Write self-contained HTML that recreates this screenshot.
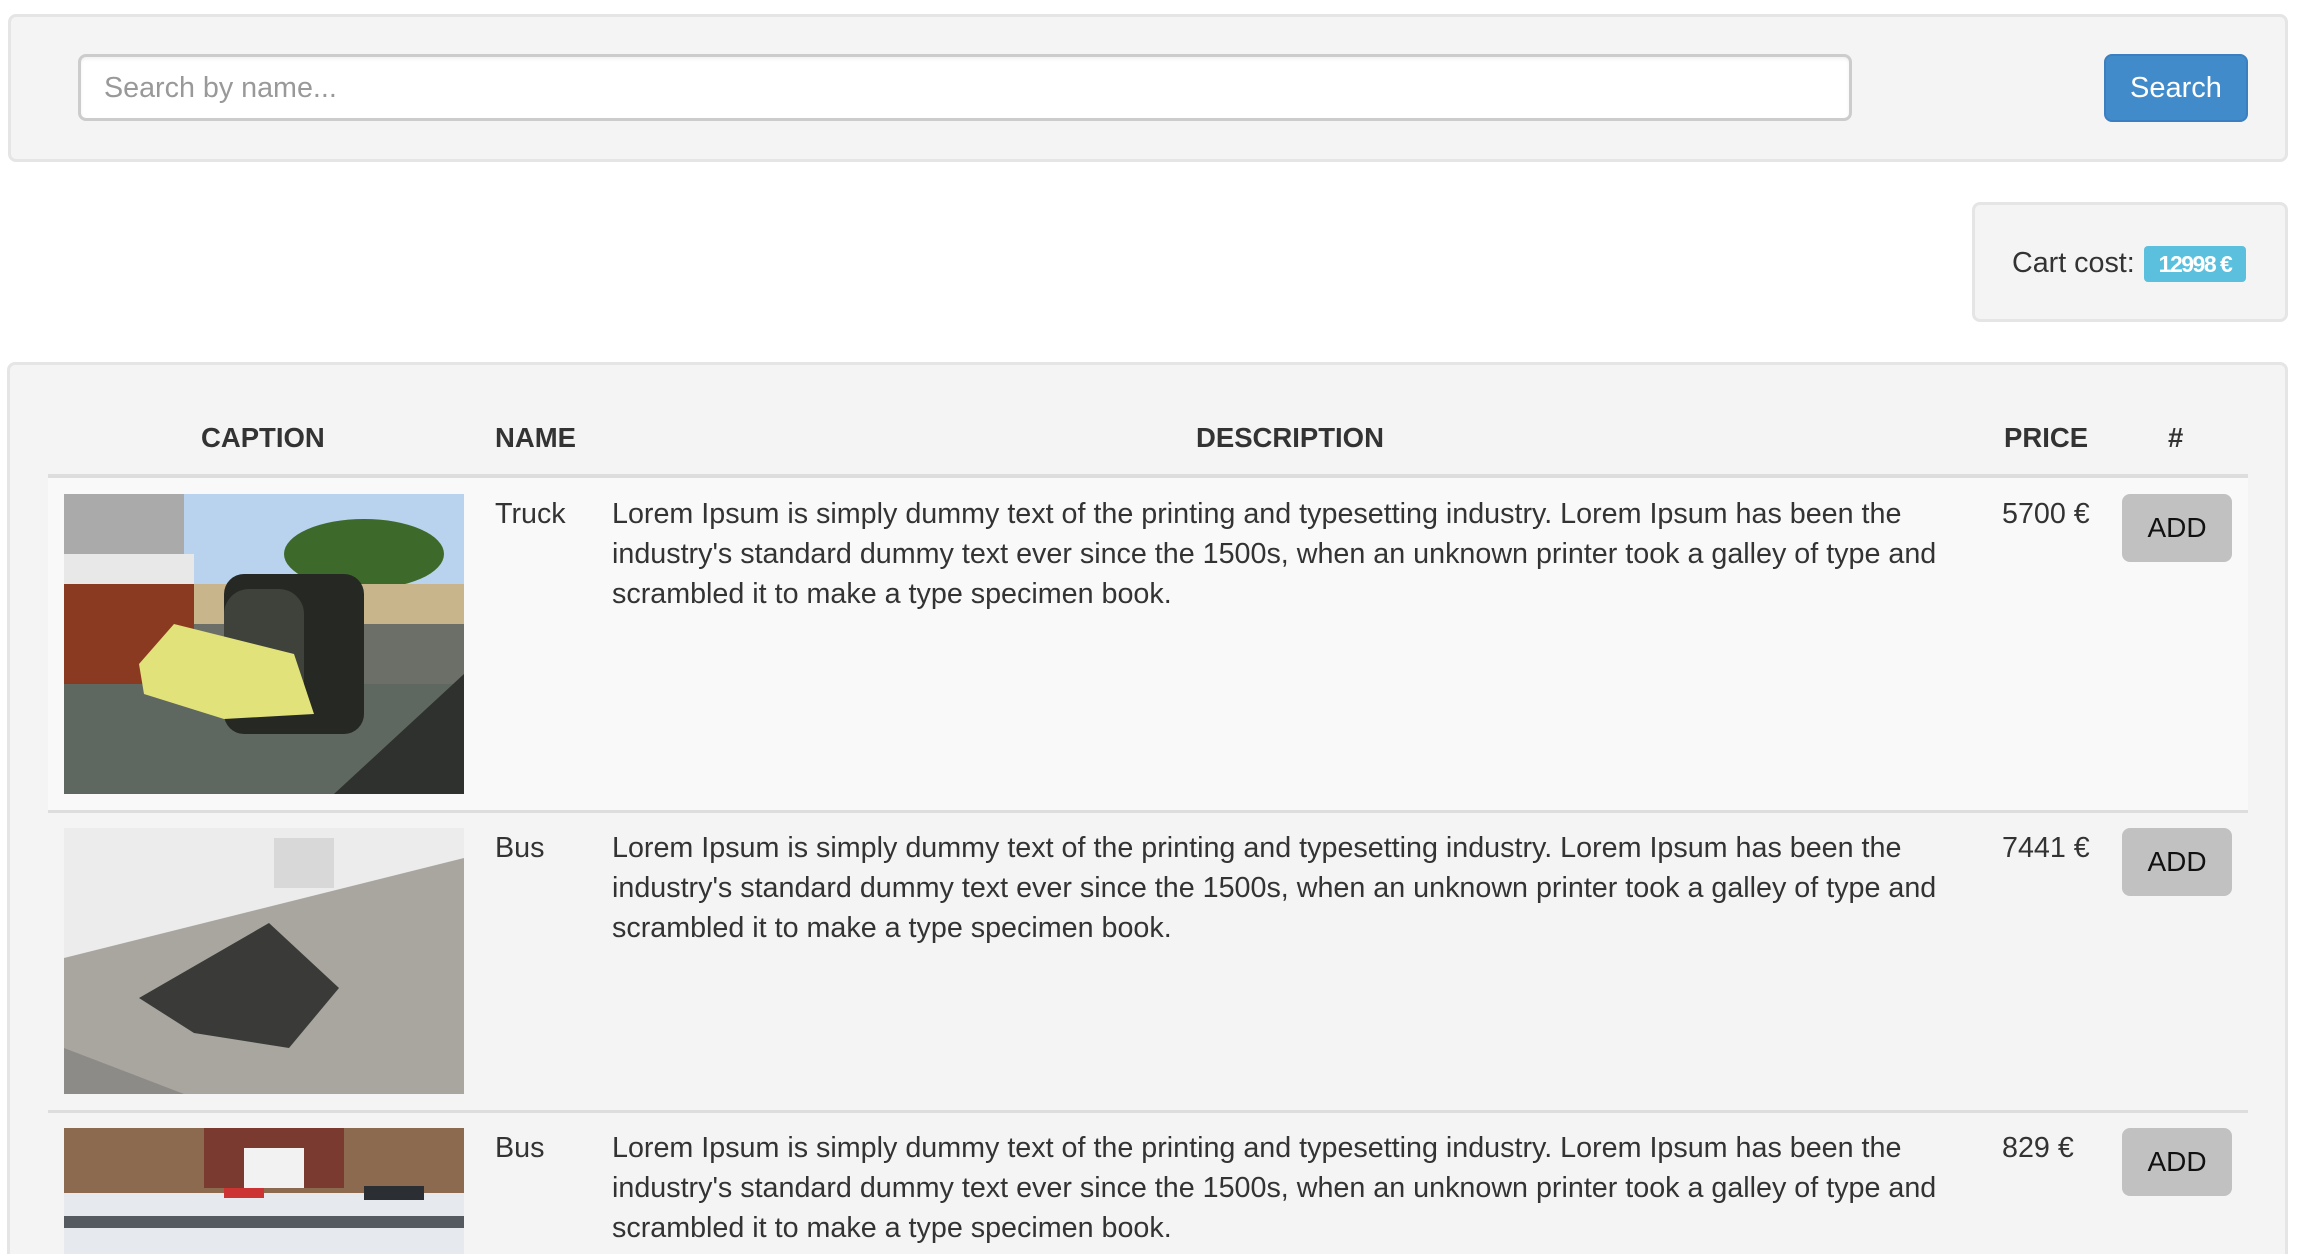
<!DOCTYPE html>
<html><head><meta charset="utf-8"><style>
*{box-sizing:border-box;margin:0;padding:0}
html,body{width:2298px;height:1254px;overflow:hidden;background:#fff;font-family:"Liberation Sans",Arial,sans-serif;color:#333}
.a{position:absolute}
.well{position:absolute;background:#f4f4f4;border:3px solid #e5e5e5;border-radius:8px}
.t{position:absolute;font-size:28.7px;line-height:40px;white-space:nowrap}
.h{position:absolute;font-size:27.5px;font-weight:bold;line-height:40px;white-space:nowrap;color:#333}
.btn{position:absolute;background:#c1c1c1;border-radius:8px;font-size:28px;color:#111;text-align:center;line-height:68px;width:110px;height:68px;left:2122px}
.hr{position:absolute;left:48px;width:2200px;height:3px;background:#ddd}
</style></head><body>
<div class="well" style="left:8px;top:14px;width:2280px;height:148px"></div>
<div class="a" style="left:78px;top:54px;width:1774px;height:67px;background:#fff;border:3px solid #ccc;border-radius:8px;box-shadow:inset 0 2px 3px rgba(0,0,0,.06)"></div>
<div class="t" style="left:104px;top:68px;color:#999">Search by name...</div>
<div class="a" style="left:2104px;top:54px;width:144px;height:68px;background:#428bca;border:2px solid #3a7fc0;border-radius:8px;color:#fff;font-size:29px;line-height:64px;text-align:center">Search</div>

<div class="well" style="left:1972px;top:202px;width:316px;height:120px"></div>
<div class="t" style="left:2012px;top:243px">Cart cost:</div>
<div class="a" style="left:2144px;top:246px;width:102px;height:36px;background:#5bc0de;border-radius:4px;color:#fff;font-weight:bold;font-size:23px;line-height:36px;text-align:center;letter-spacing:-1.5px">12998 €</div>

<div class="well" style="left:7px;top:362px;width:2281px;height:892px;border-bottom:none;border-radius:8px 8px 0 0"></div>
<div class="h" style="left:201px;top:418px">CAPTION</div>
<div class="h" style="left:495px;top:418px">NAME</div>
<div class="h" style="left:1196px;top:418px">DESCRIPTION</div>
<div class="h" style="left:2004px;top:418px">PRICE</div>
<div class="h" style="left:2168px;top:418px">#</div>
<div class="hr" style="top:474px;height:4px"></div>
<div class="a" style="left:48px;top:478px;width:2200px;height:333px;background:#f9f9f9"></div>
<div class="hr" style="top:810px"></div>
<div class="hr" style="top:1110px"></div>

<!-- row1 -->
<svg class="a" style="left:64px;top:494px" width="400" height="300" viewBox="0 0 400 300">
<rect width="400" height="300" fill="#6c6e68"/>
<rect width="400" height="90" fill="#b9d3ee"/>
<rect x="0" y="0" width="120" height="60" fill="#a9aaa9"/>
<rect x="0" y="60" width="130" height="160" fill="#8a3a20"/>
<rect x="0" y="60" width="130" height="30" fill="#e8e8e8"/>
<ellipse cx="300" cy="60" rx="80" ry="35" fill="#3d6a2b"/>
<rect x="130" y="90" width="270" height="40" fill="#c9b58c"/>
<rect x="0" y="190" width="400" height="110" fill="#5f6860"/>
<polygon points="270,300 400,180 400,300" fill="#2e312d"/>
<rect x="160" y="80" width="140" height="160" rx="20" fill="#252823"/>
<rect x="160" y="95" width="80" height="125" rx="25" fill="#3e423b"/>
<polygon points="75,170 110,130 230,160 250,220 160,225 80,200" fill="#e1e27a"/>
</svg>
<div class="t" style="left:495px;top:494px">Truck</div>
<div class="t" style="left:612px;top:494px">Lorem Ipsum is simply dummy text of the printing and typesetting industry. Lorem Ipsum has been the<br>industry's standard dummy text ever since the 1500s, when an unknown printer took a galley of type and<br>scrambled it to make a type specimen book.</div>
<div class="t" style="left:2002px;top:494px">5700 €</div>
<div class="btn" style="top:494px">ADD</div>

<!-- row2 -->
<svg class="a" style="left:64px;top:828px" width="400" height="266" viewBox="0 0 400 266">
<rect width="400" height="266" fill="#b2b0aa"/>
<rect width="400" height="130" fill="#ececec"/>
<polygon points="0,130 400,30 400,266 0,266" fill="#a9a69f"/>
<polygon points="0,220 120,266 0,266" fill="#8d8b87"/>
<polygon points="75,170 205,95 275,160 225,220 130,205" fill="#3a3b38"/>
<rect x="210" y="10" width="60" height="50" fill="#d8d8d8"/>
</svg>
<div class="t" style="left:495px;top:828px">Bus</div>
<div class="t" style="left:612px;top:828px">Lorem Ipsum is simply dummy text of the printing and typesetting industry. Lorem Ipsum has been the<br>industry's standard dummy text ever since the 1500s, when an unknown printer took a galley of type and<br>scrambled it to make a type specimen book.</div>
<div class="t" style="left:2002px;top:828px">7441 €</div>
<div class="btn" style="top:828px">ADD</div>

<!-- row3 -->
<svg class="a" style="left:64px;top:1128px" width="400" height="126" viewBox="0 0 400 126">
<rect width="400" height="126" fill="#e6e9ee"/>
<rect width="400" height="65" fill="#8b6a50"/>
<rect x="140" y="0" width="140" height="60" fill="#7a3a30"/>
<rect x="180" y="20" width="60" height="40" fill="#f2f2f2"/>
<rect x="0" y="88" width="400" height="12" fill="#555a60"/>
<rect x="160" y="60" width="40" height="10" fill="#c33"/>
<rect x="300" y="58" width="60" height="14" fill="#2b2f33"/>
</svg>
<div class="t" style="left:495px;top:1128px">Bus</div>
<div class="t" style="left:612px;top:1128px">Lorem Ipsum is simply dummy text of the printing and typesetting industry. Lorem Ipsum has been the<br>industry's standard dummy text ever since the 1500s, when an unknown printer took a galley of type and<br>scrambled it to make a type specimen book.</div>
<div class="t" style="left:2002px;top:1128px">829 €</div>
<div class="btn" style="top:1128px">ADD</div>
</body></html>
